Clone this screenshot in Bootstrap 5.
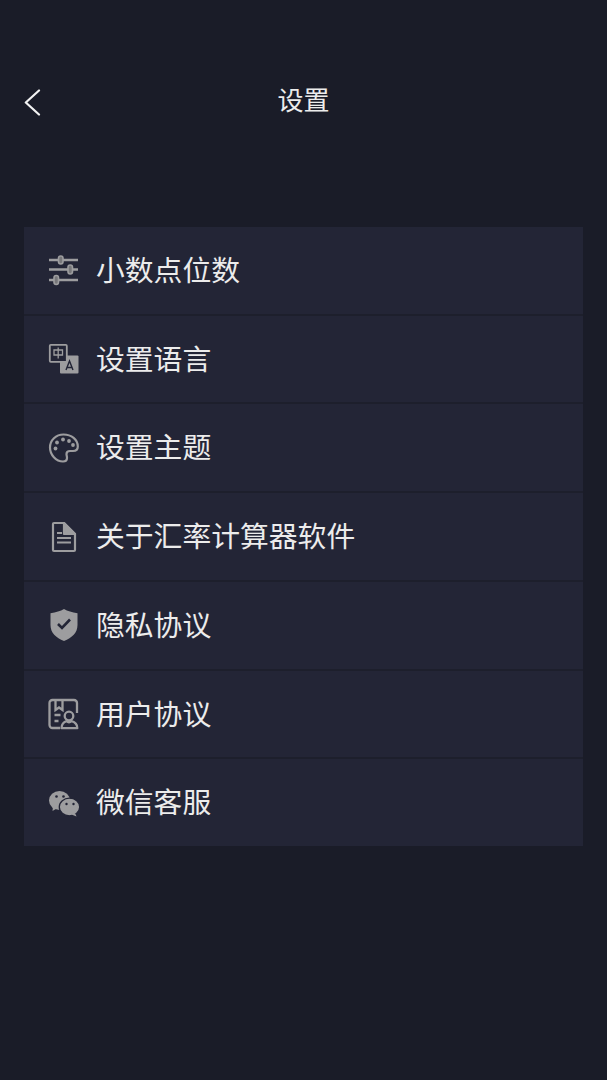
<!DOCTYPE html>
<html lang="zh">
<head>
<meta charset="utf-8">
<title>设置</title>
<link href="https://cdn.jsdelivr.net/npm/bootstrap@5.3.0/dist/css/bootstrap.min.css" rel="stylesheet">
<style>
html,body{height:100%;}
body{background:#1a1c28;font-family:"Noto Sans CJK SC","Liberation Sans",sans-serif;color:#ececec;}
.screen{padding:72px 24px 0;height:1080px;overflow:hidden;}
.topbar{height:58px;position:relative;}
.topbar-title{font-size:26px;line-height:54px;color:#ececec;}
.back-btn{position:absolute;left:0;top:15px;width:18px;height:28px;display:block;}
.menu-list{margin-top:97px;height:619px;border-radius:0;--bs-list-group-bg:#232536;--bs-list-group-border-width:0;}
.menu-row{flex:1 1 0;background:#232536;color:#ececec;border:0;border-bottom:2px solid #1d1f2c;padding:0 0 0 24px;font-size:28.8px;line-height:1;gap:16px;}
.menu-row:last-child{border-bottom:0;}
.menu-ico{width:32px;height:32px;flex:none;color:#9d9d9f;}
.menu-text{margin-bottom:2px;}
</style>
</head>
<body>
<div class="screen">
  <div class="topbar text-center">
    <a class="back-btn" href="#" aria-label="返回"><svg width="18" height="28" viewBox="0 0 18 28" fill="none" stroke="#f2f2f2" stroke-width="2.2" stroke-linecap="round" stroke-linejoin="round"><path d="M15 2.500 1.800 14.500 15 26.500"/></svg></a>
    <div class="topbar-title">设置</div>
  </div>
  <div class="list-group menu-list d-flex flex-column">
    <a href="#" class="list-group-item d-flex align-items-center menu-row">
      <svg class="menu-ico" viewBox="0 0 32 32" fill="none" stroke="currentColor" stroke-width="2.400"><path d="M1 6h29M1 15.500h29M1 26h29"/><rect x="10.500" y="2" width="4.500" height="8" rx="2.200" fill="#77777a" stroke-width="1.600"/><rect x="20" y="11" width="4.500" height="9" rx="2.200" fill="#77777a" stroke-width="1.600"/><rect x="6" y="21.500" width="4.500" height="9" rx="2.200" fill="#77777a" stroke-width="1.600"/></svg>
      <span class="menu-text">小数点位数</span>
    </a>
    <a href="#" class="list-group-item d-flex align-items-center menu-row">
      <svg class="menu-ico" viewBox="0 0 32 32"><rect x="12" y="12.500" width="18.500" height="18" rx="1" fill="currentColor"/><rect x="1.800" y="1.800" width="17" height="17" rx="1" fill="#232536" stroke="currentColor" stroke-width="1.800"/><path d="M6 7h8.500v5H6zM10.200 4.500v11" fill="none" stroke="currentColor" stroke-width="1.300"/><path d="M18 27l3.500-9 3.500 9M19.300 24.500h4.400" fill="none" stroke="#232536" stroke-width="1.400"/></svg>
      <span class="menu-text">设置语言</span>
    </a>
    <a href="#" class="list-group-item d-flex align-items-center menu-row">
      <svg class="menu-ico" viewBox="0 0 32 32"><path d="M15.500 2.500C8 2.500 2 8.200 2 15.500S8 29.500 15 29.500c3 0 4-1.500 4-3.500 0-2-.5-2.500-.5-4 0-2 1.500-3 3.500-3h3c3 0 4.800-1.800 4.800-4.500C29.800 7.500 23.500 2.500 15.500 2.500z" fill="none" stroke="currentColor" stroke-width="2.200"/><g fill="currentColor"><circle cx="7.500" cy="16.500" r="1.900"/><circle cx="9" cy="10.500" r="1.900"/><circle cx="15" cy="7.500" r="1.900"/><circle cx="21" cy="9" r="1.900"/><circle cx="25" cy="13" r="1.900"/></g></svg>
      <span class="menu-text">设置主题</span>
    </a>
    <a href="#" class="list-group-item d-flex align-items-center menu-row">
      <svg class="menu-ico" viewBox="0 0 32 32" fill="none" stroke="currentColor" stroke-width="2.200" stroke-linejoin="round"><path d="M6 2h10l11 11v16a1 1 0 0 1-1 1H6a1 1 0 0 1-1-1V3a1 1 0 0 1 1-1z"/><path d="M16 2l11 11H16z" fill="currentColor"/><path d="M9 12h5M9 17h14M9 21.500h14"/></svg>
      <span class="menu-text">关于汇率计算器软件</span>
    </a>
    <a href="#" class="list-group-item d-flex align-items-center menu-row">
      <svg class="menu-ico" viewBox="0 0 32 32"><path d="M16 0c3.500 2 8 3.500 13.500 4.200V16c0 8-5.500 12.500-13.500 16C8 28.500 2.500 24 2.500 16V4.200C8 3.500 12.500 2 16 0z" fill="currentColor"/><path d="M10 15l4 4 8-8.500" fill="none" stroke="#232536" stroke-width="2.600"/></svg>
      <span class="menu-text">隐私协议</span>
    </a>
    <a href="#" class="list-group-item d-flex align-items-center menu-row">
      <svg class="menu-ico" viewBox="0 0 32 32" fill="none" stroke="currentColor" stroke-width="2.300"><path d="M12 30H4.500A3 3 0 0 1 1.500 27V5a3 3 0 0 1 3-3H26a3 3 0 0 1 3 3v10"/><path d="M7.500 2v10l3.500-2.500L14.500 12V2"/><path d="M6.500 17h6M6.500 23h4"/><circle cx="21" cy="18" r="4.300" fill="#232536"/><path d="M13.500 30.200c.2-3.800 2.500-6.200 5-7 1.500 1.300 3.500 1.300 5 0 3 .8 5.800 3.200 5.800 7z" stroke-linejoin="round"/></svg>
      <span class="menu-text">用户协议</span>
    </a>
    <a href="#" class="list-group-item d-flex align-items-center menu-row">
      <svg class="menu-ico" viewBox="0 0 32 32"><ellipse cx="11.500" cy="13.500" rx="10.500" ry="9.500" fill="currentColor"/><path d="M5 19l-.5 5 5-3z" fill="currentColor"/><ellipse cx="21.500" cy="20" rx="10.200" ry="8.800" fill="currentColor" stroke="#232536" stroke-width="1.300"/><path d="M27 26l1.500 3.500-5-2z" fill="currentColor"/><g fill="#232536"><circle cx="8.500" cy="9.500" r="1.300"/><circle cx="15.500" cy="9.500" r="1.300"/><circle cx="18.500" cy="17" r="1.200"/><circle cx="25.500" cy="17" r="1.200"/></g></svg>
      <span class="menu-text">微信客服</span>
    </a>
  </div>
</div>
<script src="https://cdn.jsdelivr.net/npm/bootstrap@5.3.0/dist/js/bootstrap.bundle.min.js"></script>
</body>
</html>
